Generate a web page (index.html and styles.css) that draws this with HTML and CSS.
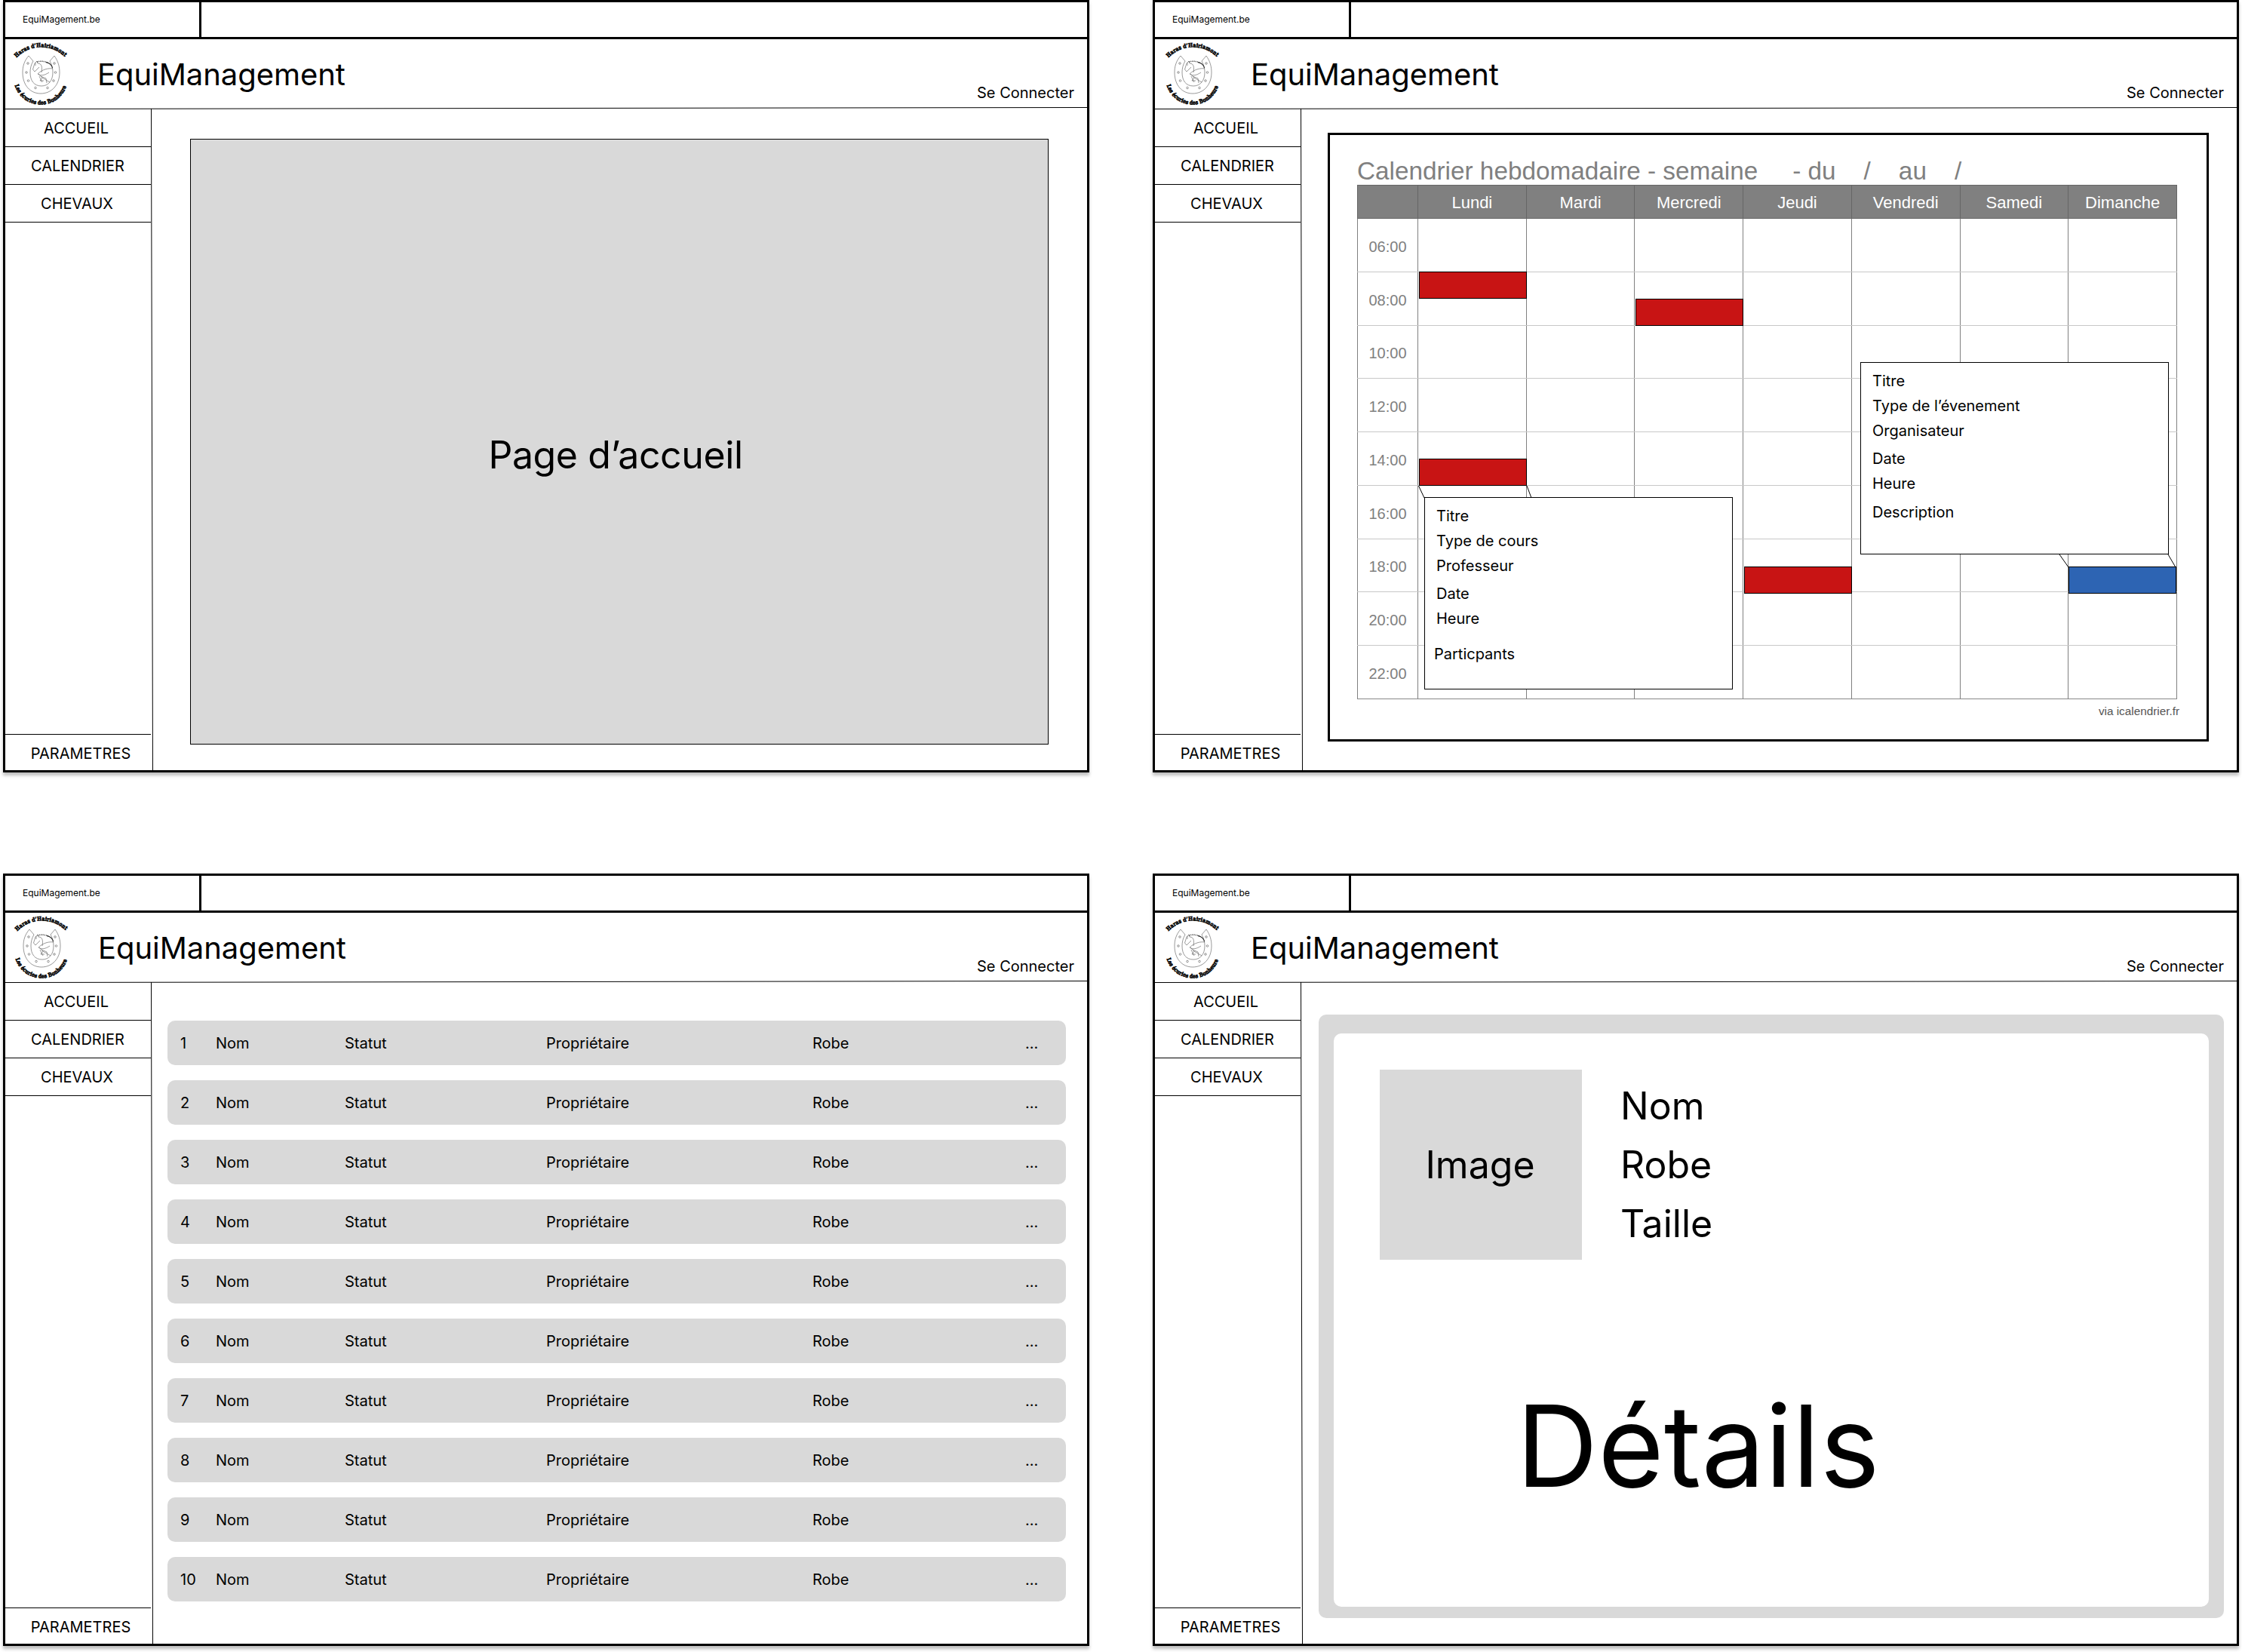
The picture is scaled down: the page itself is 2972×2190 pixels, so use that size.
FILE: index.html
```
<!DOCTYPE html>
<html lang="fr">
<head>
<meta charset="utf-8">
<title>EquiManagement</title>
<link rel="stylesheet" href="styles.css">
</head>
<body>
<svg class="defs" aria-hidden="true">
  <defs>
    <path id="arc-top" d="M4 20.500A44.700 44.700 0 0 1 69 20.500"/>
    <path id="arc-bottom" d="M1.500 57A36 36 0 0 0 70.500 57"/>
    <symbol id="logo" viewBox="0 0 72 84">
      <g fill="none" stroke="#555" stroke-width=".6">
        <path d="M20 18C14 25 12 32 12 40C12 57 22 68 36 68C50 68 61 57 61 40C61 32 59 25 54 18L48 25C51 30 52 35 52 40C52 51 46 58 37 58C27 58 22 51 22 40C22 35 23 30 26 25Z"/>
        <circle cx="19" cy="28" r="1.300"/><circle cx="17" cy="40" r="1.300"/><circle cx="19.500" cy="51" r="1.300"/><circle cx="29" cy="60.500" r="1.300"/>
        <circle cx="54" cy="28" r="1.300"/><circle cx="55.500" cy="40" r="1.300"/><circle cx="53" cy="51" r="1.300"/><circle cx="45" cy="60.500" r="1.300"/>
        <path d="M28 39L25.500 36L28 28L31 25L32 28C38 28 38 34 37 40M28 39L31 36L34 33M29 27L29 31M32 42C38 36 46 34 52 35M32 42C36 45 41 44 47 40M33 42L38 47L35 51L40 51M36 45L43 48L44 54M38 47L48 53M34 45L38 53"/>
        <path stroke="#222" stroke-width="1.100" d="M43 26.500Q50 28 51.500 34"/>
        <path stroke="#222" stroke-width="1.400" stroke-dasharray="1 1.200" d="M31 26Q38 24 45 27"/>
      </g>
      <text class="logo-text"><textPath href="#arc-top" textLength="71" lengthAdjust="spacingAndGlyphs">Haras d’Hairiamont</textPath></text>
      <text class="logo-text"><textPath href="#arc-bottom" textLength="90" lengthAdjust="spacingAndGlyphs">Les écuries des Bonheure</textPath></text>
    </symbol>
  </defs>
</svg>
<main class="board">

  <section class="screen">
    <div class="tabs"><div class="tab">EquiMagement.be</div></div>
    <header class="head"><svg class="logo"><use href="#logo"/></svg><h1 class="brand">EquiManagement</h1><a class="login">Se Connecter</a>
      <svg class="rule" viewBox="0 0 1434 3"><path d="M0 2.500L1434 .5"/></svg></header>
    <div class="body">
      <nav class="nav"><a class="link">ACCUEIL</a><a class="link calendar-link">CALENDRIER</a><a class="link">CHEVAUX</a><a class="link settings">PARAMETRES</a>
        <svg class="side" viewBox="0 0 3 877"><path d="M.5 0L2.500 877"/></svg></nav>
      <div class="content home"><div class="hero">Page d’accueil</div></div>
    </div>
  </section>

  <section class="screen right">
    <div class="tabs"><div class="tab">EquiMagement.be</div></div>
    <header class="head"><svg class="logo"><use href="#logo"/></svg><h1 class="brand">EquiManagement</h1><a class="login">Se Connecter</a>
      <svg class="rule" viewBox="0 0 1434 3"><path d="M0 2.500L1434 .5"/></svg></header>
    <div class="body">
      <nav class="nav"><a class="link">ACCUEIL</a><a class="link calendar-link">CALENDRIER</a><a class="link">CHEVAUX</a><a class="link settings">PARAMETRES</a>
        <svg class="side" viewBox="0 0 3 877"><path d="M.5 0L2.500 877"/></svg></nav>
      <div class="content agenda">
        <div class="frame">
          <h2 class="cal-title"><span>Calendrier hebdomadaire - semaine</span><span class="from">- du</span><span class="slash">/</span><span class="to">au</span><span class="slash">/</span></h2>
          <div class="cal-wrap">
          <table class="cal">
            <thead><tr><th class="hour"></th><th>Lundi</th><th>Mardi</th><th>Mercredi</th><th>Jeudi</th><th>Vendredi</th><th>Samedi</th><th>Dimanche</th></tr></thead>
            <tbody>
              <tr><td>06:00</td><td></td><td></td><td></td><td></td><td></td><td></td><td></td></tr>
              <tr><td>08:00</td><td></td><td></td><td></td><td></td><td></td><td></td><td></td></tr>
              <tr><td>10:00</td><td></td><td></td><td></td><td></td><td></td><td></td><td></td></tr>
              <tr><td>12:00</td><td></td><td></td><td></td><td></td><td></td><td></td><td></td></tr>
              <tr><td>14:00</td><td></td><td></td><td></td><td></td><td></td><td></td><td></td></tr>
              <tr><td>16:00</td><td></td><td></td><td></td><td></td><td></td><td></td><td></td></tr>
              <tr><td>18:00</td><td></td><td></td><td></td><td></td><td></td><td></td><td></td></tr>
              <tr><td>20:00</td><td></td><td></td><td></td><td></td><td></td><td></td><td></td></tr>
              <tr><td>22:00</td><td></td><td></td><td></td><td></td><td></td><td></td><td></td></tr>
            </tbody>
          </table>
          <div class="event mon-early"></div>
          <div class="event wed"></div>
          <div class="event mon-late"></div>
          <div class="event thu"></div>
          <div class="event sun"></div>
          <svg class="links" viewBox="0 0 1086 681"><path d="M81.500 398L89 414M225 398L231 414M931 489L943 506M1075 489L1085 506"/></svg>
          <div class="popup course"><p>Titre</p><p>Type de cours</p><p>Professeur</p><p class="gap">Date</p><p>Heure</p><p class="people">Particpants</p></div>
          <div class="popup meeting"><p>Titre</p><p>Type de l’évenement</p><p>Organisateur</p><p class="gap">Date</p><p>Heure</p><p class="desc">Description</p></div>
          </div>
          <p class="via">via icalendrier.fr</p>
        </div>
      </div>
    </div>
  </section>

  <section class="screen lower">
    <div class="tabs"><div class="tab">EquiMagement.be</div></div>
    <header class="head"><svg class="logo"><use href="#logo"/></svg><h1 class="brand">EquiManagement</h1><a class="login">Se Connecter</a>
      <svg class="rule" viewBox="0 0 1434 3"><path d="M0 2.500L1434 .5"/></svg></header>
    <div class="body">
      <nav class="nav"><a class="link">ACCUEIL</a><a class="link calendar-link">CALENDRIER</a><a class="link">CHEVAUX</a><a class="link settings">PARAMETRES</a>
        <svg class="side" viewBox="0 0 3 877"><path d="M.5 0L2.500 877"/></svg></nav>
      <div class="content horses">
        <div class="horse"><span>1</span><span>Nom</span><span>Statut</span><span>Propriétaire</span><span>Robe</span><span>...</span></div>
        <div class="horse"><span>2</span><span>Nom</span><span>Statut</span><span>Propriétaire</span><span>Robe</span><span>...</span></div>
        <div class="horse"><span>3</span><span>Nom</span><span>Statut</span><span>Propriétaire</span><span>Robe</span><span>...</span></div>
        <div class="horse"><span>4</span><span>Nom</span><span>Statut</span><span>Propriétaire</span><span>Robe</span><span>...</span></div>
        <div class="horse"><span>5</span><span>Nom</span><span>Statut</span><span>Propriétaire</span><span>Robe</span><span>...</span></div>
        <div class="horse"><span>6</span><span>Nom</span><span>Statut</span><span>Propriétaire</span><span>Robe</span><span>...</span></div>
        <div class="horse"><span>7</span><span>Nom</span><span>Statut</span><span>Propriétaire</span><span>Robe</span><span>...</span></div>
        <div class="horse"><span>8</span><span>Nom</span><span>Statut</span><span>Propriétaire</span><span>Robe</span><span>...</span></div>
        <div class="horse"><span>9</span><span>Nom</span><span>Statut</span><span>Propriétaire</span><span>Robe</span><span>...</span></div>
        <div class="horse"><span>10</span><span>Nom</span><span>Statut</span><span>Propriétaire</span><span>Robe</span><span>...</span></div>
      </div>
    </div>
  </section>

  <section class="screen right">
    <div class="tabs"><div class="tab">EquiMagement.be</div></div>
    <header class="head"><svg class="logo"><use href="#logo"/></svg><h1 class="brand">EquiManagement</h1><a class="login">Se Connecter</a>
      <svg class="rule" viewBox="0 0 1434 3"><path d="M0 2.500L1434 .5"/></svg></header>
    <div class="body">
      <nav class="nav"><a class="link">ACCUEIL</a><a class="link calendar-link">CALENDRIER</a><a class="link">CHEVAUX</a><a class="link settings">PARAMETRES</a>
        <svg class="side" viewBox="0 0 3 877"><path d="M.5 0L2.500 877"/></svg></nav>
      <div class="content profile">
        <div class="card">
          <div class="card-inner">
            <div class="identity"><div class="photo">Image</div><div class="facts"><p>Nom</p><p>Robe</p><p>Taille</p></div></div>
            <div class="details">Détails</div>
          </div>
        </div>
      </div>
    </div>
  </section>
</main>
</body>
</html>
```
FILE: styles.css
```
* { box-sizing: border-box; }
body { margin: 0; background: #fff; color: #000; font-family: Inter, sans-serif; font-size: 20px; }
h1, h2, p { margin: 0; font-weight: 400; }
svg { display: block; }
.defs { position: absolute; width: 0; height: 0; }
.logo-text { font: 700 7.5px "DejaVu Serif", serif; fill: #000; stroke: #000; stroke-width: .6px; }

.board {
  display: grid;
  grid-template-columns: 1440px 1440px;
  grid-template-rows: 1024px 1024px;
  gap: 134px 84px;
  padding-left: 4px;
  width: 2972px;
  height: 2190px;
}
.screen {
  display: flex;
  flex-direction: column;
  border: 3px solid #000;
  background: #fff;
  box-shadow: 0 4px 4px rgba(0, 0, 0, .25);
}

.tabs { height: 49px; border-bottom: 3px solid #000; display: flex; }
.tab { width: 260px; border-right: 3px solid #000; padding-left: 23px; font-size: 12px; line-height: 46px; }

.head { position: relative; height: 91px; display: flex; align-items: flex-start; }
.logo { width: 72px; height: 84px; margin: 4px 0 0 11px; overflow: visible; }
.brand { font-size: 40px; line-height: 48px; margin: 23px 0 0 39px; letter-spacing: -.05px; }
.right .logo { margin-left: 14px; }
.right .brand { margin-left: 41px; }
.lower .logo { margin-left: 12px; }
.login { margin: 59px 17px 0 auto; line-height: 24px; }
.rule { position: absolute; left: 0; top: 90px; width: 1434px; height: 3px; stroke: #000; overflow: visible; }

.body { flex: 1; display: flex; }
.nav { position: relative; width: 196px; display: flex; flex-direction: column; padding-top: 2px; }
.link { width: 193px; height: 50px; line-height: 50px; border-bottom: 1px solid #000; text-align: center; padding-right: 5px; }
.calendar-link { padding-right: 1px; }
.link:nth-child(3) { padding-right: 3px; }
.settings { margin-top: auto; height: 48px; line-height: 51px; border-top: 1px solid #000; border-bottom: 0; padding: 0 0 0 7px; }
.side { position: absolute; right: 0; top: 1px; width: 3px; height: 877px; stroke: #000; }
.content { flex: 1; display: flex; flex-direction: column; }

.home { padding: 41px 51px 34px 49px; }
.hero {
  flex: 1;
  display: flex;
  align-items: center;
  justify-content: center;
  background: #d9d9d9;
  border: 1px solid #000;
  font-size: 50px;
  letter-spacing: -.4px;
  padding: 34px 10px 0 0;
}

.agenda { padding: 33px 37px 38px 33px; }
.frame { flex: 1; border: 3px solid #000; padding: 29px 0 0 36px; }
.cal-title {
  display: flex;
  height: 37px;
  font: 33.300px/38px "Liberation Sans", sans-serif;
  color: #808080;
  white-space: pre;
}
.from { margin-left: 46px; }
.slash, .to { margin-left: 37px; }
.cal-wrap { position: relative; width: 1087px; margin-bottom: 1px; }
.cal { border-collapse: collapse; table-layout: fixed; width: 1087px; height: 682px; font: 20px "Liberation Sans", sans-serif; color: #808080; }
.cal th { height: 44px; padding: 3px 0 0; background: #808080; color: #fff; font-weight: 400; font-size: 22px; border: 1px solid #666; }
.cal .hour { width: 80px; }
.cal td { padding: 5px 0 0; text-align: center; border: 1px solid #808080; border-top-color: #c8c8c8; border-bottom-color: #c8c8c8; }
.cal tr:last-child td { border-bottom-color: #888; }
.event { position: absolute; width: 143px; height: 36px; background: #c81414; border: 1px solid #000; }
.mon-early { left: 82px; top: 115px; }
.wed { left: 369px; top: 151px; }
.mon-late { left: 82px; top: 363px; }
.thu { left: 513px; top: 506px; }
.sun { left: 943px; top: 506px; background: #2d64b3; }
.links { position: absolute; left: 0; top: 1px; width: 1086px; height: 681px; fill: none; stroke: #000; }
.popup { position: absolute; width: 409px; height: 255px; border: 1px solid #000; background: #fff; padding: 10px 0 0 15px; line-height: 28px; }
.popup p { height: 33px; }
.popup .gap { margin-top: 4px; }
.course { left: 89px; top: 414px; }
.meeting { left: 667px; top: 235px; }
.course .people { margin: 14px 0 0 -3px; }
.meeting .desc { margin-top: 5px; }
.via { margin: 5px 36px 0 0; text-align: right; font: 15.300px/22px "Liberation Sans", sans-serif; color: #555; }

.horses { padding: 52px 28px 0 19px; gap: 20px; }
.horse {
  display: grid;
  grid-template-columns: 47px 171px 267px 353px 282px 1fr;
  align-items: center;
  height: 59px;
  padding-left: 17px;
  border-radius: 10px;
  background: #d9d9d9;
}

.profile { padding: 44px 17px 34px 21px; }
.card { flex: 1; display: flex; background: #d9d9d9; border-radius: 10px; padding: 25px 20px 15px 20px; }
.card-inner { flex: 1; background: #fff; border-radius: 10px; padding: 48px 0 0 61px; }
.identity { display: flex; font-size: 50px; }
.photo { width: 268px; height: 252px; background: #d9d9d9; display: flex; align-items: center; justify-content: center; padding-right: 2px; }
.facts { margin-left: 51px; padding-top: 9px; line-height: 78px; }
.details { font-size: 150px; line-height: 182px; margin: 156px 0 0 181px; }
```
